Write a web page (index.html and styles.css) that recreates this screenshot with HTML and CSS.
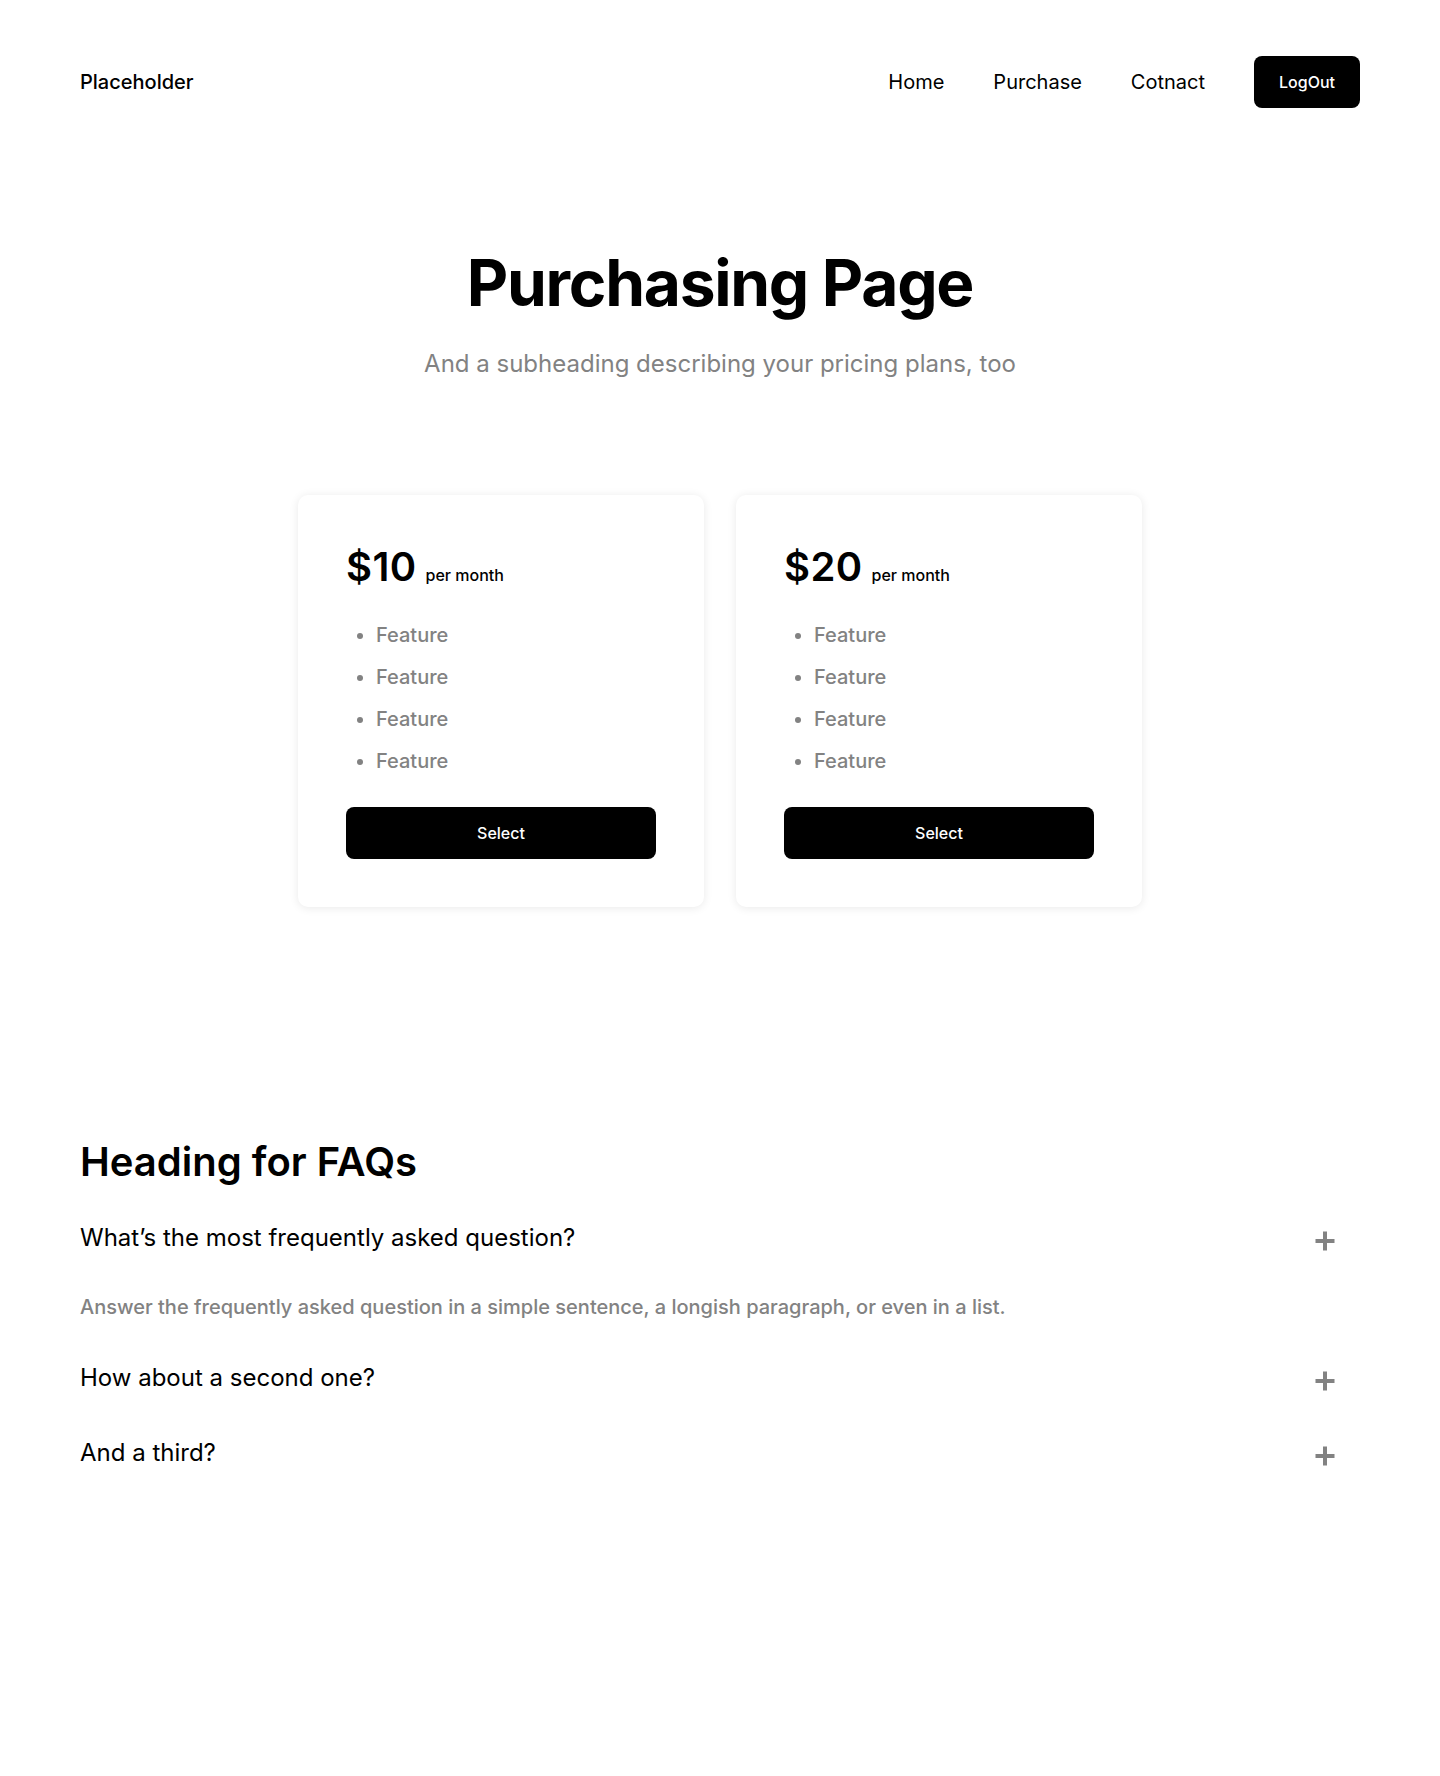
FILE: index.html
```html
<!DOCTYPE html>
<html lang="en">
<head>
<meta charset="utf-8">
<title>Purchasing Page</title>
<link rel="stylesheet" href="styles.css">
</head>
<body>
<header class="topbar">
  <div class="brand">Placeholder</div>
  <nav class="nav">
    <a class="nav-link" href="#">Home</a>
    <a class="nav-link" href="#">Purchase</a>
    <a class="nav-link" href="#">Cotnact</a>
    <button class="btn btn-logout">LogOut</button>
  </nav>
</header>

<section class="hero">
  <h1 class="hero-title">Purchasing Page</h1>
  <p class="hero-sub">And a subheading describing your pricing plans, too</p>
</section>

<section class="plans">
  <div class="plan">
    <div class="price"><span class="amount">$10</span><span class="period">per month</span></div>
    <ul class="features">
      <li>Feature</li>
      <li>Feature</li>
      <li>Feature</li>
      <li>Feature</li>
    </ul>
    <button class="btn btn-select">Select</button>
  </div>
  <div class="plan">
    <div class="price"><span class="amount">$20</span><span class="period">per month</span></div>
    <ul class="features">
      <li>Feature</li>
      <li>Feature</li>
      <li>Feature</li>
      <li>Feature</li>
    </ul>
    <button class="btn btn-select">Select</button>
  </div>
</section>

<section class="faq">
  <h2 class="faq-title">Heading for FAQs</h2>
  <div class="faq-list">
    <div class="faq-item">
      <div class="faq-q">
        <span>What’s the most frequently asked question?</span>
        <svg class="plus" viewBox="0 0 24 24" width="24" height="24"><path d="M12 2.5v19M2.5 12h19" stroke="#828282" stroke-width="4" fill="none"/></svg>
      </div>
      <p class="faq-a">Answer the frequently asked question in a simple sentence, a longish paragraph, or even in a list.</p>
    </div>
    <div class="faq-item">
      <div class="faq-q">
        <span>How about a second one?</span>
        <svg class="plus" viewBox="0 0 24 24" width="24" height="24"><path d="M12 2.5v19M2.5 12h19" stroke="#828282" stroke-width="4" fill="none"/></svg>
      </div>
    </div>
    <div class="faq-item">
      <div class="faq-q">
        <span>And a third?</span>
        <svg class="plus" viewBox="0 0 24 24" width="24" height="24"><path d="M12 2.5v19M2.5 12h19" stroke="#828282" stroke-width="4" fill="none"/></svg>
      </div>
    </div>
  </div>
</section>
</body>
</html>
```

FILE: styles.css
```css
* { box-sizing: border-box; }

html, body {
  margin: 0;
  padding: 0;
  background: #ffffff;
}

body {
  font-family: Inter, "Noto Sans", "Liberation Sans", sans-serif;
  color: #000000;
  min-height: 1776px;
}

.topbar {
  display: flex;
  align-items: center;
  justify-content: space-between;
  padding: 56px 80px 0 80px;
}

.brand {
  font-size: 20px;
  font-weight: 500;
  line-height: 30px;
}

.nav {
  display: flex;
  align-items: center;
  gap: 49px;
}

.nav-link {
  color: #000;
  text-decoration: none;
  font-size: 20px;
  font-weight: 400;
  line-height: 30px;
}

.btn {
  font-family: inherit;
  border: none;
  background: #000;
  color: #fff;
  cursor: pointer;
  border-radius: 8px;
  font-size: 16px;
  font-weight: 500;
  line-height: 24px;
}

.btn-logout {
  padding: 14px 25px;
  height: 52px;
  font-weight: 500;
}

.hero {
  text-align: center;
  padding-top: 136px;
}

.hero-title {
  margin: 0;
  font-size: 64px;
  font-weight: 700;
  line-height: 77px;
  letter-spacing: -0.02em;
}

.hero-sub {
  margin: 25px 0 0 0;
  font-size: 24px;
  font-weight: 400;
  line-height: 36px;
  color: #828282;
}

.plans {
  display: flex;
  justify-content: center;
  gap: 32px;
  margin-top: 113px;
}

.plan {
  width: 406px;
  background: #fff;
  border-radius: 10px;
  padding: 48px;
  box-shadow: 0 1px 10px rgba(0, 0, 0, 0.09);
}

.price {
  display: flex;
  align-items: baseline;
  gap: 9px;
  height: 48px;
}

.amount {
  font-size: 40px;
  font-weight: 600;
  line-height: 48px;
  letter-spacing: 0.01em;
}

.period {
  font-size: 16px;
  font-weight: 500;
  line-height: 24px;
}

.features {
  margin: 29px 0 31px 0;
  padding-left: 30px;
  color: #828282;
  font-size: 20px;
  font-weight: 500;
  line-height: 30px;
}

.features li + li {
  margin-top: 12px;
}

.btn-select {
  display: block;
  width: 100%;
  height: 52px;
  padding: 14px 24px;
}

.faq {
  padding: 0 80px;
  margin-top: 231px;
}

.faq-title {
  margin: 0;
  font-size: 40px;
  font-weight: 600;
  line-height: 48px;
}

.faq-list {
  margin-top: 34px;
  display: flex;
  flex-direction: column;
  gap: 39px;
}

.faq-q {
  display: flex;
  align-items: center;
  justify-content: space-between;
  font-size: 24px;
  font-weight: 400;
  line-height: 36px;
}

.plus {
  display: block;
  margin-right: 23px;
  margin-top: 6px;
  flex: none;
}

.faq-a {
  margin: 37px 0 0 0;
  font-size: 20px;
  font-weight: 500;
  line-height: 28px;
  color: #828282;
}
```
